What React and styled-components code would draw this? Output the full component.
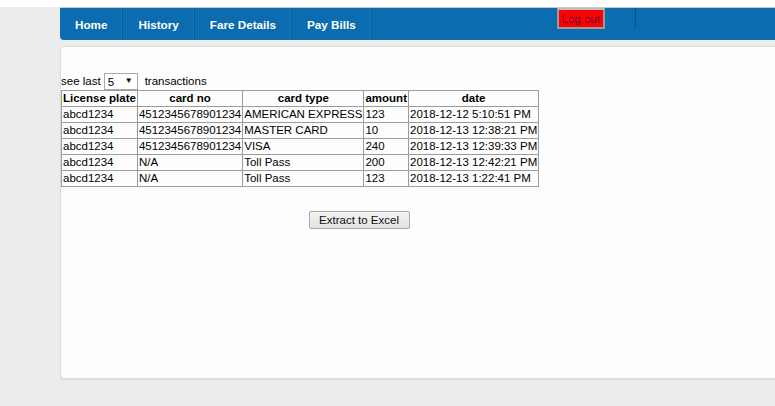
import React from "react";
import styled, { createGlobalStyle } from "styled-components";

const Global = createGlobalStyle`
  html, body { margin: 0; padding: 0; overflow: hidden; }
  body {
    background: #ececec;
    font-family: "Liberation Sans", Arial, sans-serif;
    font-size: 11.5px;
    color: #000;
  }
`;

const Page = styled.div`
  width: 775px;
  height: 406px;
  overflow: hidden;
  border-top: 7px solid #fff;
  box-sizing: border-box;
`;

const Main = styled.div`
  margin-left: 60px;
  width: 760px;
`;

const Nav = styled.nav`
  display: flex;
  align-items: stretch;
  height: 33px;
  background: #0b6cb0;
  border-top: 1px solid #c9c9c9;
  border-bottom-left-radius: 4px;
  box-sizing: border-box;
`;

const NavItem = styled.a`
  display: flex;
  align-items: center;
  padding: 0 15px;
  color: #fff;
  font-weight: bold;
  font-size: 11.7px;
  text-decoration: none;
  border-right: 1px solid #0a5d98;
  box-shadow: inset -1px 0 0 #1a78b8;
`;

const NavSpacer = styled.div`
  width: ${(p) => p.$w}px;
`;

const LogoutWrap = styled.div`
  display: flex;
  align-items: flex-start;
`;

const LogoutButton = styled.button`
  height: 21px;
  width: 48px;
  padding: 0;
  background: #ff0000;
  border: 2px solid #9a9a9a;
  border-top-color: #bdbdbd;
  color: #5a0a3a;
  font-family: "Liberation Sans", Arial, sans-serif;
  font-size: 11.5px;
  cursor: pointer;
`;

const NavDivider = styled.div`
  width: 1px;
  height: 20px;
  background: #0a5080;
  margin-left: 30px;
`;

const Panel = styled.section`
  margin-top: 6px;
  height: 333px;
  background: #fdfdfd;
  border: 1px solid #dcdcdc;
  border-radius: 4px;
  box-shadow: 0 1px 1px rgba(0, 0, 0, 0.08);
  box-sizing: border-box;
  padding-top: 26px;
`;

const Filter = styled.div`
  display: flex;
  align-items: center;
  height: 17px;
`;

const FilterText = styled.span`
  line-height: 17px;
  margin-left: ${(p) => p.$ml || 0}px;
`;

const SelectWrap = styled.span`
  position: relative;
  display: inline-block;
  margin-left: 3px;
`;

const Select = styled.select`
  appearance: none;
  -webkit-appearance: none;
  width: 34px;
  height: 17px;
  padding: 0 0 0 3px;
  border: 1px solid #a9a9a9;
  border-radius: 0;
  background: #fff;
  font-family: "Liberation Sans", Arial, sans-serif;
  font-size: 11.5px;
  color: #000;
  outline: none;
`;

const Arrow = styled.span`
  position: absolute;
  right: 5px;
  top: 3px;
  font-size: 8px;
  line-height: 10px;
  pointer-events: none;
`;

const Table = styled.table`
  border-collapse: collapse;
  font-size: 11.5px;
`;

const Th = styled.th`
  border: 1px solid #9c9c9c;
  padding: 1px 1px;
  line-height: 13px;
  font-weight: bold;
  text-align: center;
  white-space: nowrap;
`;

const Td = styled.td`
  border: 1px solid #9c9c9c;
  padding: 1px 1px;
  line-height: 13px;
  text-align: left;
  white-space: nowrap;
`;

const ButtonRow = styled.div`
  width: 596px;
  text-align: center;
  margin-top: 24px;
`;

const ExcelButton = styled.button`
  height: 18px;
  width: 101px;
  padding: 0;
  background: linear-gradient(#f4f4f4, #e2e2e2);
  border: 1px solid #a8a8a8;
  border-radius: 2px;
  font-family: "Liberation Sans", Arial, sans-serif;
  font-size: 11.5px;
  color: #111;
  line-height: 16px;
`;

const rows = [
  ["abcd1234", "4512345678901234", "AMERICAN EXPRESS", "123", "2018-12-12 5:10:51 PM"],
  ["abcd1234", "4512345678901234", "MASTER CARD", "10", "2018-12-13 12:38:21 PM"],
  ["abcd1234", "4512345678901234", "VISA", "240", "2018-12-13 12:39:33 PM"],
  ["abcd1234", "N/A", "Toll Pass", "200", "2018-12-13 12:42:21 PM"],
  ["abcd1234", "N/A", "Toll Pass", "123", "2018-12-13 1:22:41 PM"],
];

export default function App() {
  return (
    <Page>
      <Global />
      <Main>
        <Nav>
          <NavItem href="#">Home</NavItem>
          <NavItem href="#">History</NavItem>
          <NavItem href="#">Fare Details</NavItem>
          <NavItem href="#">Pay Bills</NavItem>
          <NavSpacer $w={185} />
          <LogoutWrap>
            <LogoutButton>Log out</LogoutButton>
            <NavDivider />
          </LogoutWrap>
        </Nav>
        <Panel>
          <Filter>
            <FilterText>see last</FilterText>
            <SelectWrap>
              <Select defaultValue="5">
                <option>5</option>
                <option>10</option>
                <option>20</option>
              </Select>
              <Arrow>▼</Arrow>
            </SelectWrap>
            <FilterText $ml={7}>transactions</FilterText>
          </Filter>
          <Table>
            <thead>
              <tr>
                <Th>License plate</Th>
                <Th>card no</Th>
                <Th>card type</Th>
                <Th>amount</Th>
                <Th>date</Th>
              </tr>
            </thead>
            <tbody>
              {rows.map((r, i) => (
                <tr key={i}>
                  {r.map((c, j) => (
                    <Td key={j}>{c}</Td>
                  ))}
                </tr>
              ))}
            </tbody>
          </Table>
          <ButtonRow>
            <ExcelButton>Extract to Excel</ExcelButton>
          </ButtonRow>
        </Panel>
      </Main>
    </Page>
  );
}
